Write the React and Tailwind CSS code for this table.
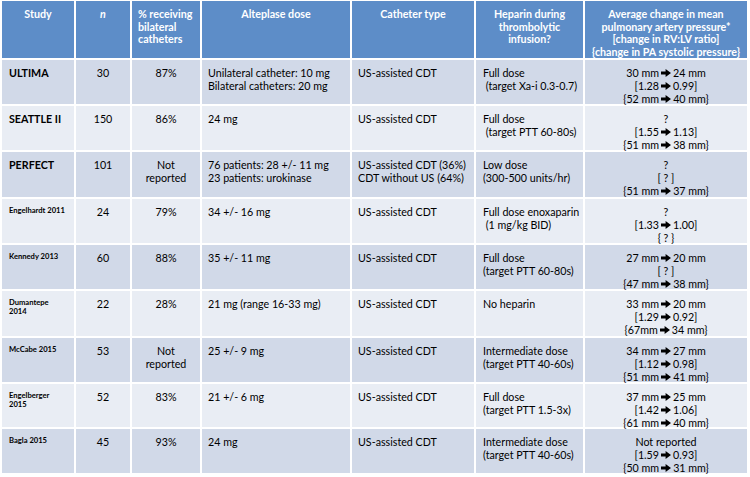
import React from "react";

const Arrow = () => (
  <svg width="10" height="8" viewBox="0 0 10 8" className="inline-block mx-[2px] align-[0px]">
    <path d="M0 2.6 H4.6 V0 L10 4 L4.6 8 V5.4 H0 Z" fill="#000" />
  </svg>
);

const rows = [
  { study: "ULTIMA", big: true, n: "30", pct: ["87%"], alt: ["Unilateral catheter: 10 mg", "Bilateral catheters: 20 mg"], cath: ["US-assisted CDT"], hep: ["Full dose", " (target Xa-i 0.3-0.7)"], avg: ["30 mm → 24 mm", "[1.28 → 0.99]", "{52 mm → 40 mm}"] },
  { study: "SEATTLE II", big: true, n: "150", pct: ["86%"], alt: ["24 mg"], cath: ["US-assisted CDT"], hep: ["Full dose", " (target PTT 60-80s)"], avg: ["?", "[1.55 → 1.13]", "{51 mm → 38 mm}"] },
  { study: "PERFECT", big: true, n: "101", pct: ["Not", "reported"], alt: ["76 patients: 28 +/- 11 mg", "23 patients: urokinase"], cath: ["US-assisted CDT (36%)", "CDT without US (64%)"], hep: ["Low dose", "(300-500 units/hr)"], avg: ["?", "[ ? ]", "{51 mm → 37 mm}"] },
  { study: "Engelhardt 2011", n: "24", pct: ["79%"], alt: ["34 +/- 16 mg"], cath: ["US-assisted CDT"], hep: ["Full dose enoxaparin", " (1 mg/kg BID)"], avg: ["?", "[1.33 → 1.00]", "{ ? }"] },
  { study: "Kennedy 2013", n: "60", pct: ["88%"], alt: ["35 +/- 11 mg"], cath: ["US-assisted CDT"], hep: ["Full dose", "(target PTT 60-80s)"], avg: ["27 mm → 20 mm", "[ ? ]", "{47 mm → 38 mm}"] },
  { study: "Dumantepe\n2014", n: "22", pct: ["28%"], alt: ["21 mg (range 16-33 mg)"], cath: ["US-assisted CDT"], hep: ["No heparin"], avg: ["33 mm → 20 mm", "[1.29 → 0.92]", "{67mm → 34 mm}"] },
  { study: "McCabe 2015", n: "53", pct: ["Not", "reported"], alt: ["25 +/- 9 mg"], cath: ["US-assisted CDT"], hep: ["Intermediate dose", "(target PTT 40-60s)"], avg: ["34 mm → 27 mm", "[1.12 → 0.98]", "{51 mm → 41 mm}"] },
  { study: "Engelberger\n2015", n: "52", pct: ["83%"], alt: ["21 +/- 6 mg"], cath: ["US-assisted CDT"], hep: ["Full dose", "(target PTT 1.5-3x)"], avg: ["37 mm → 25 mm", "[1.42 → 1.06]", "{61 mm → 40 mm}"] },
  { study: "Bagla 2015", n: "45", pct: ["93%"], alt: ["24 mg"], cath: ["US-assisted CDT"], hep: ["Intermediate dose", "(target PTT 40-60s)"], avg: ["Not reported", "[1.59 → 0.93]", "{50 mm → 31 mm}"] },
];

const Lines = ({ lines }) => lines.map((l, i) => <div key={i} className="whitespace-pre">{l}</div>);

const AvgLine = ({ text }) => {
  const parts = text.split(" → ");
  if (parts.length === 1) return <div className="whitespace-pre">{text}</div>;
  return (
    <div className="whitespace-pre">
      {parts[0]}
      <Arrow />
      {parts[1]}
    </div>
  );
};

export default function App() {
  const font = { fontFamily: "Lato, 'Liberation Sans', sans-serif" };
  const hd = "bg-[#5d8dc8] text-white font-bold text-[10.7px] leading-[12.5px] pt-[7px]";
  return (
    <div className="w-[750px] h-[477px] bg-white pt-px pl-[2px]" style={font}>
      <div className="grid w-[745px] grid-cols-[72px_54px_68px_148px_122px_107px_162px] grid-rows-[57px_44px_44px_45px_44px_44px_45px_44px_43px_44px] gap-[2px] bg-white">
        <div className={`${hd} text-center`}>Study</div>
        <div className={`${hd} text-center italic`}>n</div>
        <div className={`${hd} pl-[6px]`}>
          <div>% receiving</div>
          <div>bilateral</div>
          <div>catheters</div>
        </div>
        <div className={`${hd} text-center`}>Alteplase dose</div>
        <div className={`${hd} text-center`}>Catheter type</div>
        <div className={`${hd} text-center`}>
          <div>Heparin during</div>
          <div>thrombolytic</div>
          <div>infusion?</div>
        </div>
        <div className={`${hd} text-center pt-[4px]`}>
          <div>Average change in mean</div>
          <div>pulmonary artery pressure*</div>
          <div>[change in RV:LV ratio]</div>
          <div>{"{change in PA systolic pressure}"}</div>
        </div>
        {rows.map((r, i) => {
          const bg = i % 2 === 0 ? "bg-[#d1d9e8]" : "bg-[#e9edf4]";
          const cell = `${bg} text-[10.7px] leading-[13px] text-black pt-[6px]`;
          return (
            <React.Fragment key={i}>
              {r.big ? (
                <div className={`${cell} font-bold pl-[7px]`}>{r.study}</div>
              ) : (
                <div className={`${bg} text-black font-bold text-[7.6px] leading-[9px] pt-[7px] pl-[7px] whitespace-pre`}>{r.study}</div>
              )}
              <div className={`${cell} text-center`}>{r.n}</div>
              <div className={`${cell} text-center`}>
                <Lines lines={r.pct} />
              </div>
              <div className={`${cell} pl-[6px]`}>
                <Lines lines={r.alt} />
              </div>
              <div className={`${cell} pl-[6px]`}>
                <Lines lines={r.cath} />
              </div>
              <div className={`${cell} pl-[7px]`}>
                <Lines lines={r.hep} />
              </div>
              <div className={`${cell} text-center`}>
                {r.avg.map((t, j) => (
                  <AvgLine key={j} text={t} />
                ))}
              </div>
            </React.Fragment>
          );
        })}
      </div>
    </div>
  );
}
